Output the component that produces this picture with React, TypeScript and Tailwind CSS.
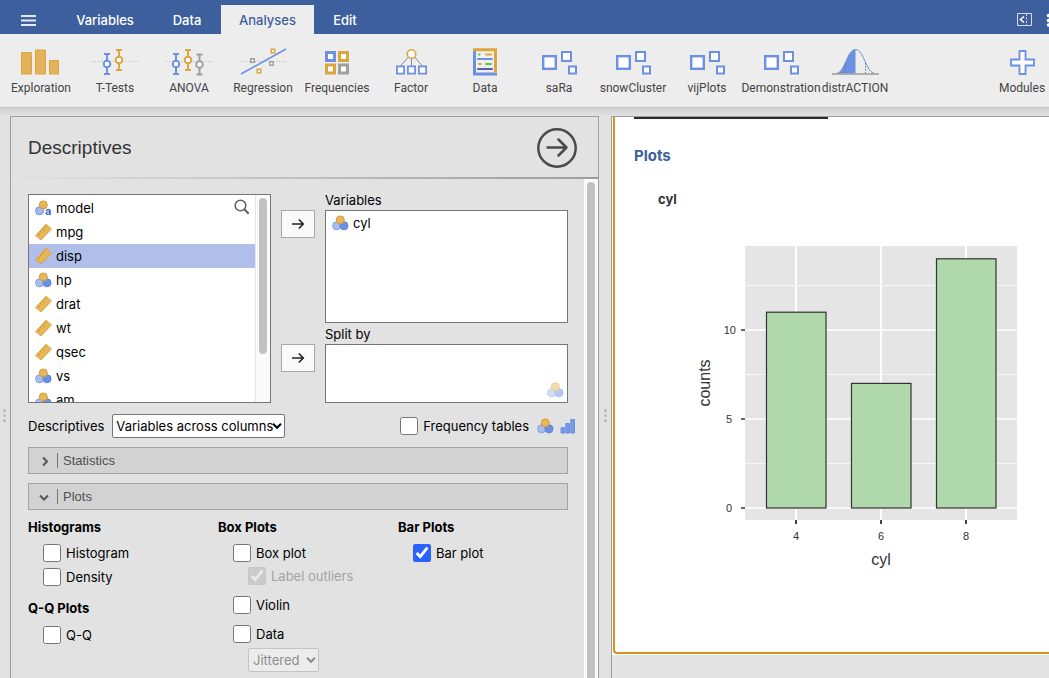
import type { ReactNode } from "react";

const BLUE = "#6b90e4";
const ORANGE = "#dfa53d";
const GRAY = "#a0a0a0";

/* ---------- variable type icons ---------- */

function NominalIcon({ faded = false }: { faded?: boolean }) {
  return (
    <svg width="17" height="16" viewBox="0 0 17 16" className={faded ? "opacity-50" : ""}>
      <circle cx="4.6" cy="10.8" r="4" fill="#a6bcf0" stroke="#7e9fe8" />
      <circle cx="12" cy="10.8" r="4" fill="#6b90e4" stroke="#5580de" />
      <circle cx="8.3" cy="4.9" r="4" fill="#e6b657" stroke="#d59a35" />
    </svg>
  );
}

function TextIcon() {
  return (
    <svg width="17" height="16" viewBox="0 0 17 16" className="overflow-visible">
      <circle cx="4.6" cy="10.8" r="4" fill="#a6bcf0" stroke="#6b90e4" />
      <circle cx="8.3" cy="4.9" r="4" fill="#e6b657" stroke="#d59a35" />
      <text x="10" y="15" fontSize="11" fontWeight="bold" fill="#3f68d8" fontFamily="Inter, sans-serif">
        a
      </text>
    </svg>
  );
}

function RulerIcon() {
  return (
    <svg width="17" height="18" viewBox="0 0 17 18">
      <path d="M.7 12.6 11 1.2l5.4 4.7L6 17z" fill="#e8b759" stroke="#dd9f3c" />
      <path d="m2.8 10.4 2 1.8M5 8l1.400 1.300M7 5.700l2 1.800M9.200 3.300l1.400 1.300" stroke="#c98a2b" />
    </svg>
  );
}

function OrdinalIcon() {
  return (
    <svg width="16" height="16" viewBox="0 0 16 16">
      <path d="M1 9.500h3.500V15H1zM5.800 5.500h3.700V15H5.800zM10.800 1.500h3.700V15h-3.700z" fill="#7799e8" stroke="#6b90e4" />
    </svg>
  );
}

function ArrowIcon() {
  return (
    <svg width="14" height="12" viewBox="0 0 14 12" fill="none" stroke="#222" strokeWidth="1.600">
      <path d="M1 6h11M7.800 1.500 12.300 6l-4.500 4.500" />
    </svg>
  );
}

/* ---------- ribbon icons ---------- */

function Glyph({ children }: { children: ReactNode }) {
  return (
    <svg width="46" height="28" viewBox="0 0 46 28" fill="none" className="overflow-visible">
      {children}
    </svg>
  );
}

function Dotted() {
  return <path d="M0 13.500h46" stroke="#b4b9c8" strokeDasharray="1 2" />;
}

function Whisker({ x, y, color }: { x: number; y: number; color: string }) {
  return (
    <g stroke={color} strokeWidth="2">
      <path d={`M${x - 3} ${y - 10}h6M${x - 3} ${y + 10}h6M${x} ${y - 10}v20`} />
      <circle cx={x} cy={y} r="3.300" fill="#fff" />
    </g>
  );
}

function Box({ x, y, s, color = BLUE, w = 2 }: { x: number; y: number; s: number; color?: string; w?: number }) {
  return <rect x={x + w / 2} y={y + w / 2} width={s - w} height={s - w} fill="#fff" stroke={color} strokeWidth={w} />;
}

const explorationIcon = (
  <Glyph>
    <path d="M3.500 4.500h10V26h-10zM17.500 2h10v24h-10zM31.500 12.500h9V26h-9z" fill="#e2b25d" stroke={ORANGE} />
  </Glyph>
);

const ttestIcon = (
  <Glyph>
    <Dotted />
    <Whisker x={15} y={16} color={BLUE} />
    <Whisker x={27} y={12} color={ORANGE} />
  </Glyph>
);

const anovaIcon = (
  <Glyph>
    <Dotted />
    <Whisker x={10} y={16} color={BLUE} />
    <Whisker x={22} y={12} color={ORANGE} />
    <Whisker x={33.5} y={16.5} color={GRAY} />
  </Glyph>
);

const regressionIcon = (
  <Glyph>
    <Dotted />
    <path d="M1 26 46 1" stroke={BLUE} strokeWidth="1.500" />
    <Box x={30.5} y={0.5} s={5} color={ORANGE} w={1.5} />
    <Box x={16.5} y={20.5} s={5} color={ORANGE} w={1.5} />
    <Box x={10} y={10} s={5} color={GRAY} w={1.5} />
    <Box x={29} y={13} s={5} color={GRAY} w={1.5} />
  </Glyph>
);

const frequenciesIcon = (
  <Glyph>
    <Box x={11} y={3} s={11} w={3} />
    <Box x={24} y={3} s={11} w={3} color={ORANGE} />
    <Box x={11} y={15.5} s={11} w={3} color={ORANGE} />
    <Box x={24} y={15.5} s={11} w={3} color={GRAY} />
  </Glyph>
);

const factorIcon = (
  <Glyph>
    <path d="M23.500 10v9M20.500 9l-8 9M26.500 9l8 9" stroke="#8c8c8c" />
    <circle cx="23.500" cy="6" r="4.300" fill="#fff" stroke={ORANGE} strokeWidth="1.600" />
    <Box x={8} y={17.5} s={9} w={1.8} />
    <Box x={19} y={17.5} s={9} w={1.8} />
    <Box x={30} y={17.5} s={9} w={1.8} />
  </Glyph>
);

const dataIcon = (
  <Glyph>
    <path d="M12 2h22v24H12z" fill="#f0f0f0" />
    <path d="M12.500 2v24H35" stroke={BLUE} strokeWidth="3" />
    <path d="M11 1.800h22.500V24.500" stroke={ORANGE} strokeWidth="3" />
    <g strokeWidth="2" strokeLinecap="round">
      <path d="M17 6.500h.5M24 16h5" stroke="#4fce4f" />
      <path d="M24 6.500h5M17 16h2" stroke={ORANGE} />
      <path d="M16 11h14" stroke={BLUE} />
      <path d="M16 21h14" stroke="#5464b4" />
    </g>
  </Glyph>
);

const moduleIcon = (
  <Glyph>
    <Box x={6} y={7} s={15} w={2.4} />
    <Box x={25} y={3} s={11} w={2} />
    <Box x={32} y={17.5} s={9} w={2} />
  </Glyph>
);

const distrIcon = (
  <Glyph>
    <path d="M5 25.500C13 24 15 1.500 23.500 1.500v24z" fill={BLUE} />
    <path d="M4 25.500C13 25 15 1.500 23.500 1.500S34 25 43 25.500" stroke="#7890c0" />
    <path d="M13.500 15v10M33.500 15v10" stroke="#5873b5" strokeDasharray="1.500 1.500" />
    <path d="M0 26h47" stroke="#9a9a9a" strokeWidth="1.500" />
  </Glyph>
);

const plusIcon = (
  <Glyph>
    <path d="M20.500 3h6v8.500H35v6h-8.500V26h-6v-8.500H12v-6h8.500z" fill="#fff" stroke={BLUE} strokeWidth="1.800" />
  </Glyph>
);

const modules = [
  { label: "Exploration", icon: explorationIcon },
  { label: "T-Tests", icon: ttestIcon },
  { label: "ANOVA", icon: anovaIcon },
  { label: "Regression", icon: regressionIcon },
  { label: "Frequencies", icon: frequenciesIcon },
  { label: "Factor", icon: factorIcon },
  { label: "Data", icon: dataIcon },
  { label: "saRa", icon: moduleIcon },
  { label: "snowCluster", icon: moduleIcon },
  { label: "vijPlots", icon: moduleIcon },
  { label: "Demonstration", icon: moduleIcon },
  { label: "distrACTION", icon: distrIcon },
];

const variables = [
  { name: "model", type: "text" },
  { name: "mpg", type: "continuous" },
  { name: "disp", type: "continuous", selected: true },
  { name: "hp", type: "nominal" },
  { name: "drat", type: "continuous" },
  { name: "wt", type: "continuous" },
  { name: "qsec", type: "continuous" },
  { name: "vs", type: "nominal" },
  { name: "am", type: "nominal" },
];

const bars = [
  { cyl: 4, count: 11 },
  { cyl: 6, count: 7 },
  { cyl: 8, count: 14 },
];

/* ---------- top bars ---------- */

function TabBar() {
  return (
    <header className="flex h-[34px] shrink-0 items-end overflow-hidden bg-[#3e5f9e] text-[13px] font-medium text-white">
      <button aria-label="Menu" className="flex h-[29px] w-[57px] items-center justify-center">
        <svg width="15" height="12" viewBox="0 0 15 12" stroke="#e4e9f3" strokeWidth="2">
          <path d="M0 2h15M0 6.500h15M0 11h15" />
        </svg>
      </button>
      <nav className="flex">
        <button className="h-[29px] w-24">Variables</button>
        <button className="h-[29px] w-[68px]">Data</button>
        <button className="h-[29px] w-[93px] bg-[#ededed] text-[#3e5f9e]">Analyses</button>
        <button className="h-[29px] w-[62px]">Edit</button>
      </nav>
      <div className="ml-auto flex h-[29px] items-center">
        <button aria-label="Hide results">
          <svg width="15" height="13" viewBox="0 0 15 13" fill="none" stroke="#d4dcec">
            <path d="M.5.500h14v12H.5z" />
            <path d="M9.500 1v11" strokeDasharray="2 1.500" />
            <path d="M7 3.500 3.500 6.500 7 9.500" strokeWidth="1.600" stroke="#fff" />
          </svg>
        </button>
        <button aria-label="More" className="ml-3.5 w-[3px] overflow-hidden">
          <svg width="5" height="14" viewBox="0 0 5 14" fill="#fff">
            <circle cx="2.500" cy="2.500" r="1.800" />
            <circle cx="2.500" cy="7.500" r="1.800" />
            <circle cx="2.500" cy="12" r="1.800" />
          </svg>
        </button>
      </div>
    </header>
  );
}

function Ribbon() {
  return (
    <div className="flex h-[74px] shrink-0 overflow-hidden border-b border-[#c4c4c4] bg-[#ededed] pl-1 font-[Roboto,'Liberation_Sans',sans-serif] text-[12px] leading-[18px] text-[#444]">
      {modules.map((m) => (
        <button key={m.label} className="flex w-[74px] shrink-0 flex-col items-center pt-3.5 whitespace-nowrap">
          {m.icon}
          <span className="mt-[3px]">{m.label}</span>
        </button>
      ))}
      <button className="ml-auto flex w-[54px] shrink-0 flex-col items-center pt-3.5">
        {plusIcon}
        <span className="mt-[3px]">Modules</span>
      </button>
    </div>
  );
}

/* ---------- options panel ---------- */

function Splitter() {
  return (
    <div className="flex flex-col items-center gap-0.5 pt-[293px]">
      <i className="size-[3px] rounded-full bg-[#b8b8b8]" />
      <i className="size-[3px] rounded-full bg-[#b8b8b8]" />
      <i className="size-[3px] rounded-full bg-[#b8b8b8]" />
    </div>
  );
}

function TypeIcon({ type }: { type: string }) {
  if (type === "text") return <TextIcon />;
  if (type === "continuous") return <RulerIcon />;
  return <NominalIcon />;
}

function VariableList() {
  return (
    <div className="relative flex h-[209px] w-[243px] overflow-hidden border border-[#767676] bg-white">
      <ul className="flex-1 pt-px">
        {variables.map((v) => (
          <li
            key={v.name}
            className={"flex h-6 items-center gap-1 pl-1.5 leading-6 " + (v.selected ? "bg-[#afbfea]" : "")}
          >
            <TypeIcon type={v.type} />
            {v.name}
          </li>
        ))}
      </ul>
      <div className="w-[15px] border-l border-[#e4e4e4] bg-[#fafafa] pt-[3px] pl-[3px]">
        <div className="h-[156px] w-2 rounded-full bg-[#c1c1c1]" />
      </div>
      <button aria-label="Search" className="absolute top-1 right-5">
        <svg width="16" height="16" viewBox="0 0 16 16" fill="none" stroke="#606060">
          <circle cx="6.500" cy="6.500" r="5.300" strokeWidth="1.600" />
          <path d="m10.300 10.300 4.400 4.400" strokeWidth="2" />
        </svg>
      </button>
    </div>
  );
}

function MoveButton({ label }: { label: string }) {
  return (
    <button
      aria-label={label}
      className="flex h-7 w-[34px] items-center justify-center border border-[#a8a8a8] bg-[#fafafa]"
    >
      <ArrowIcon />
    </button>
  );
}

function Check({ label, checked = false, disabled = false }: { label: string; checked?: boolean; disabled?: boolean }) {
  return (
    <label className={"flex h-[18px] items-center gap-[5px] " + (disabled ? "text-[#a3a3a3]" : "")}>
      <input type="checkbox" defaultChecked={checked} disabled={disabled} className="size-[18px] accent-[#2962ff]" />
      {label}
    </label>
  );
}

function Chevron() {
  return (
    <svg
      width="10"
      height="8"
      viewBox="0 0 10 8"
      fill="none"
      stroke="currentColor"
      strokeWidth="2"
      className="pointer-events-none absolute top-2 right-[3px]"
    >
      <path d="m1 1.800 4 4 4-4" />
    </svg>
  );
}

function Section({ title, open = false }: { title: string; open?: boolean }) {
  return (
    <button className="flex h-[27px] w-full items-center border border-[#a3a3a3] bg-[#d2d2d2] font-['Liberation_Sans',Arial,sans-serif] text-[13px] text-[#505050]">
      <svg width="10" height="10" viewBox="0 0 10 10" fill="none" stroke="#555" strokeWidth="2" className="ml-2.5">
        {open ? <path d="m1 3.500 4 4 4-4" /> : <path d="m4 1.500 4 4-4 4" />}
      </svg>
      <span className="ml-2 border-l border-[#777] pl-[5px] leading-[15px]">{title}</span>
    </button>
  );
}

function Options() {
  return (
    <section className="flex w-[589px] shrink-0 flex-col border border-b-0 border-[#9d9d9d]">
      <div className="flex h-[60px] shrink-0 items-center justify-between pt-0.5 pr-[21px] pl-[17px]">
        <h1 className="font-['Liberation_Sans',Arial,sans-serif] text-[19px] text-[#333]">Descriptives</h1>
        <button aria-label="Close options">
          <svg width="40" height="40" viewBox="0 0 40 40" fill="none" stroke="#4a4a4a" strokeWidth="2.500">
            <circle cx="20" cy="20" r="18.700" />
            <path d="M10.500 19.500h18M21.500 11.500l8 8-8 8" strokeLinecap="round" strokeLinejoin="round" />
          </svg>
        </button>
      </div>
      <div className="h-0.5 shrink-0 bg-linear-to-r from-[#e2e2e2] to-[#9d9d9d]" />

      <div className="flex min-h-0 flex-1">
        <div className="flex-1 overflow-hidden pt-[15px] pr-4 pl-[17px]">
          <div className="flex gap-2.5">
            <VariableList />
            <div className="flex flex-col gap-[106px] pt-4">
              <MoveButton label="Move to Variables" />
              <MoveButton label="Move to Split by" />
            </div>
            <div className="flex-1">
              <h2 className="h-4 leading-[13px]">Variables</h2>
              <div className="h-[113px] border border-[#767676] bg-white">
                <div className="flex h-6 items-center gap-1 pl-1.5 leading-6">
                  <NominalIcon />
                  cyl
                </div>
              </div>
              <h2 className="h-[21px] leading-[23px]">Split by</h2>
              <div className="flex h-[59px] items-end justify-end border border-[#767676] bg-white p-1 pr-[3px]">
                <NominalIcon faded />
              </div>
            </div>
          </div>

          <div className="-mr-2 mt-[11px] flex h-6 items-center">
            <label htmlFor="layout" className="mr-2">Descriptives</label>
            <div className="relative">
              <select
                id="layout"
                className="block h-6 w-[173px] appearance-none rounded-[2px] border border-[#767676] bg-white pl-[3px] text-black"
              >
                <option>Variables across columns</option>
                <option>Variables across rows</option>
              </select>
              <Chevron />
            </div>
            <div className="ml-auto flex items-center gap-1.5">
              <Check label="Frequency tables" />
              <span className="ml-0.5"><NominalIcon /></span>
              <OrdinalIcon />
            </div>
          </div>

          <div className="mt-[9px] flex flex-col gap-[9px]">
            <Section title="Statistics" />
            <Section title="Plots" open />
          </div>

          <div className="mt-2 flex">
            <div className="w-[190px]">
              <h3 className="h-[18px] font-bold leading-[18px]">Histograms</h3>
              <div className="mt-2 ml-[15px] flex flex-col gap-1.5">
                <Check label="Histogram" />
                <Check label="Density" />
              </div>
              <h3 className="mt-[13px] h-[18px] font-bold leading-[18px]">Q-Q Plots</h3>
              <div className="mt-[9px] ml-[15px]">
                <Check label="Q-Q" />
              </div>
            </div>
            <div className="w-[180px]">
              <h3 className="h-[18px] font-bold leading-[18px]">Box Plots</h3>
              <div className="mt-2 ml-[15px] flex flex-col">
                <Check label="Box plot" />
                <div className="mt-[5px] ml-[15px]">
                  <Check label="Label outliers" checked disabled />
                </div>
                <div className="mt-[11px] flex flex-col gap-[11px]">
                  <Check label="Violin" />
                  <Check label="Data" />
                </div>
                <div className="relative mt-[5px] ml-[15px] w-[71px] text-[#8c8c8c]">
                  <select
                    disabled
                    aria-label="Data point layout"
                    className="block h-6 w-full appearance-none rounded-[2px] border border-[#c4c4c4] bg-[#ececec] pl-1"
                  >
                    <option>Jittered</option>
                    <option>Stacked</option>
                  </select>
                  <Chevron />
                </div>
              </div>
            </div>
            <div className="flex-1">
              <h3 className="h-[18px] font-bold leading-[18px]">Bar Plots</h3>
              <div className="mt-2 ml-[15px]">
                <Check label="Bar plot" checked />
              </div>
            </div>
          </div>
        </div>
        <div className="flex w-3.5 shrink-0 flex-col bg-[#fafafa] pt-[3px] pl-[3px]">
          <div className="w-2 flex-1 rounded-t-full bg-[#c1c1c1]" />
        </div>
      </div>
    </section>
  );
}

/* ---------- results ---------- */

function BarPlot() {
  // 0 sits at y=262 in the plot area, one count is 17.8px
  const yPos = (n: number) => 262 - n * 17.8;
  const xPos = (i: number) => 51 + i * 85;

  return (
    <svg
      width="330"
      height="330"
      viewBox="-50 0 330 330"
      fill="#333"
      fontFamily="'Liberation Sans', Arial, sans-serif"
      role="img"
      aria-label="Bar plot of cyl"
    >
      <rect width="272" height="274" fill="#e5e5e5" />
      {[2.5, 7.5, 12.5].map((n) => (
        <path key={n} d={`M0 ${yPos(n)}h272`} stroke="#f6f6f6" />
      ))}
      {[0, 5, 10].map((n) => (
        <g key={n}>
          <path d={`M0 ${yPos(n)}h272`} stroke="#fff" strokeWidth="1.500" />
          <path d={`M-4 ${yPos(n)}h4`} stroke="#333" strokeWidth="1.500" />
          <text x={n === 10 ? -9 : -13} y={yPos(n) + 4} fontSize="11" textAnchor="end">
            {n}
          </text>
        </g>
      ))}
      {bars.map((b, i) => (
        <g key={b.cyl}>
          <path d={`M${xPos(i)} 0v274`} stroke="#fff" strokeWidth="1.800" />
          <path d={`M${xPos(i)} 274v4`} stroke="#333" strokeWidth="1.800" />
          <rect
            x={xPos(i) - 29.5}
            y={yPos(b.count)}
            width="59.500"
            height={b.count * 17.8}
            fill="#afd9ab"
            stroke="#333"
            strokeWidth="1.200"
          />
          <text x={xPos(i)} y="294" fontSize="11" textAnchor="middle">
            {b.cyl}
          </text>
        </g>
      ))}
      <text x="136" y="319" fontSize="16" textAnchor="middle">
        cyl
      </text>
      <text transform="translate(-35 137) rotate(-90)" fontSize="16" textAnchor="middle">
        counts
      </text>
    </svg>
  );
}

function Results() {
  return (
    <main className="min-w-0 flex-1 overflow-hidden border-t border-l border-[#9d9d9d] bg-[#e4e4e4]">
      <div className="bg-white pb-px pl-px">
        <article className="h-[537px] rounded-bl border-b-2 border-l-2 border-[#d9921e] bg-white pl-[19px]">
          <div className="h-0.5 w-[194px] bg-[#2b2b2b]" />
          <h2 className="mt-[25px] text-[15px] leading-6 font-bold text-[#3e5f9e]">Plots</h2>
          <h3 className="mt-[21px] ml-6 text-[13px] leading-5 font-bold text-[#333]">cyl</h3>
          <div className="mt-[37px] ml-[61px]">
            <BarPlot />
          </div>
        </article>
      </div>
    </main>
  );
}

export default function App() {
  return (
    <div className="flex h-screen flex-col overflow-hidden bg-[#e2e2e2] font-[Inter,'Liberation_Sans',sans-serif] text-[13px] leading-5 text-black">
      <TabBar />
      <Ribbon />
      <div className="h-2 shrink-0 bg-linear-to-b from-[#d2d2d2] to-[#e2e2e2]" />
      <div className="flex min-h-0 flex-1">
        <div className="w-2.5 shrink-0 pr-0.5">
          <Splitter />
        </div>
        <Options />
        <div className="w-3 shrink-0">
          <Splitter />
        </div>
        <Results />
      </div>
    </div>
  );
}
